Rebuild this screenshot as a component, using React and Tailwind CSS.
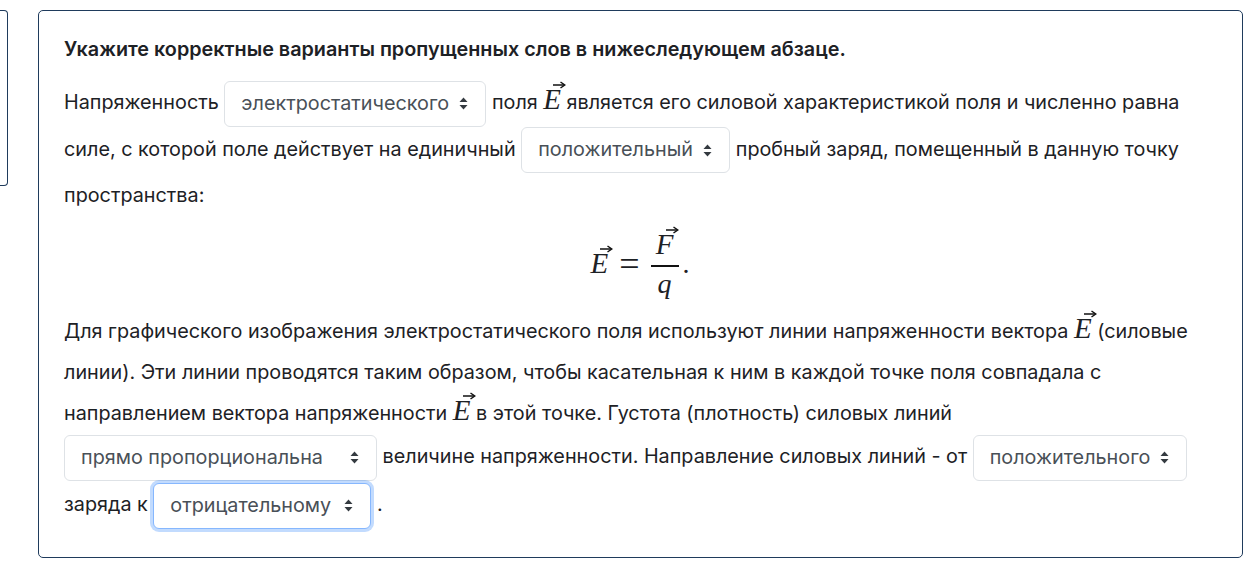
import React from 'react';

const Arrows = () => (
  <svg width="9" height="13" viewBox="0 0 9 13" className="shrink-0">
    <path d="M4.5 0.5 L8.5 5 H0.5 Z" fill="#343a40" />
    <path d="M4.5 12.5 L8.5 8 H0.5 Z" fill="#343a40" />
  </svg>
);

const Select = ({ value, width, focused, spaced }) => (
  <span
    className={
      'inline-flex h-[46px] items-center justify-between rounded-[6px] border bg-white pl-[16px] pr-[17px] align-middle leading-none text-[#495057] ' +
      (spaced ? 'my-[1px] ' : '') +
      (focused
        ? 'border-[#86b7fe] shadow-[0_0_0_3px_rgba(13,110,253,0.25)]'
        : 'border-[#dee2e6]')
    }
    style={{ width }}
  >
    <span>{value}</span>
    <Arrows />
  </span>
);

const VecArrow = () => (
  <svg width="14" height="8" viewBox="0 0 14 8" className="absolute left-[9px] top-[-4px]">
    <path d="M1 4 H12" stroke="#111" strokeWidth="1.5" />
    <path d="M8.5 1 L12.8 4 L8.5 7" stroke="#111" strokeWidth="1.5" fill="none" />
  </svg>
);

// inline vector letter, MathJax-like
const Vec = ({ letter }) => (
  <span className="relative inline-block font-['Liberation_Serif',serif] text-[29px] italic leading-none">
    <VecArrow />
    {letter}
  </span>
);

export default function App() {
  return (
    <div className="flex min-h-[562px] items-start gap-[30px] bg-white pt-[10px] font-['Inter',sans-serif] text-[19.8px] text-[#1d2125]">
      <div className="h-[176px] w-[8px] shrink-0 rounded-r-[4px] border border-l-0 border-[#1f3b5c]" />

      <div className="w-[1205px] shrink-0 rounded-[5px] border border-[#1f3b5c] pb-[27px] pl-[25px] pr-[42px] pt-[24px]">
        <p className="mb-[17px] font-semibold leading-[28px]">
          Укажите корректные варианты пропущенных слов в нижеследующем абзаце.
        </p>

        <p className="leading-[44px]">
          Напряженность <Select value="электростатического" width={262} /> поля <Vec letter="E" /> является его
          силовой характеристикой поля и численно равна силе, с которой поле действует на единичный{' '}
          <Select value="положительный" width={209} /> пробный заряд, помещенный в данную точку пространства:
        </p>

        {/* formula E = F / q */}
        <div className="flex items-center justify-center gap-[11px] pb-[13px] pl-[16px] pt-[13px] font-['Liberation_Serif',serif] text-[28px] leading-none">
          <Vec letter="E" />
          <span className="text-[36px] not-italic">=</span>
          <span className="flex flex-col items-center">
            <span className="pb-[6px]">
              <Vec letter="F" />
            </span>
            <span className="h-[1.5px] w-[28px] bg-[#111]" />
            <span className="pt-[3px] italic">q</span>
          </span>
          <span className="-ml-[7px]">.</span>
        </div>

        <p className="leading-[41px]">
          Для графического изображения электростатического поля используют линии напряженности вектора{' '}
          <Vec letter="E" /> (силовые линии). Эти линии проводятся таким образом, чтобы касательная к ним в каждой
          точке поля совпадала с направлением вектора напряженности <Vec letter="E" /> в этой точке. Густота
          (плотность) силовых линий <Select value="прямо пропорциональна" width={313} spaced /> величине
          напряженности. Направление силовых линий - от <Select value="положительного" width={214} spaced /> заряда
          к <Select value="отрицательному" width={218} focused spaced /> .
        </p>
      </div>
    </div>
  );
}
